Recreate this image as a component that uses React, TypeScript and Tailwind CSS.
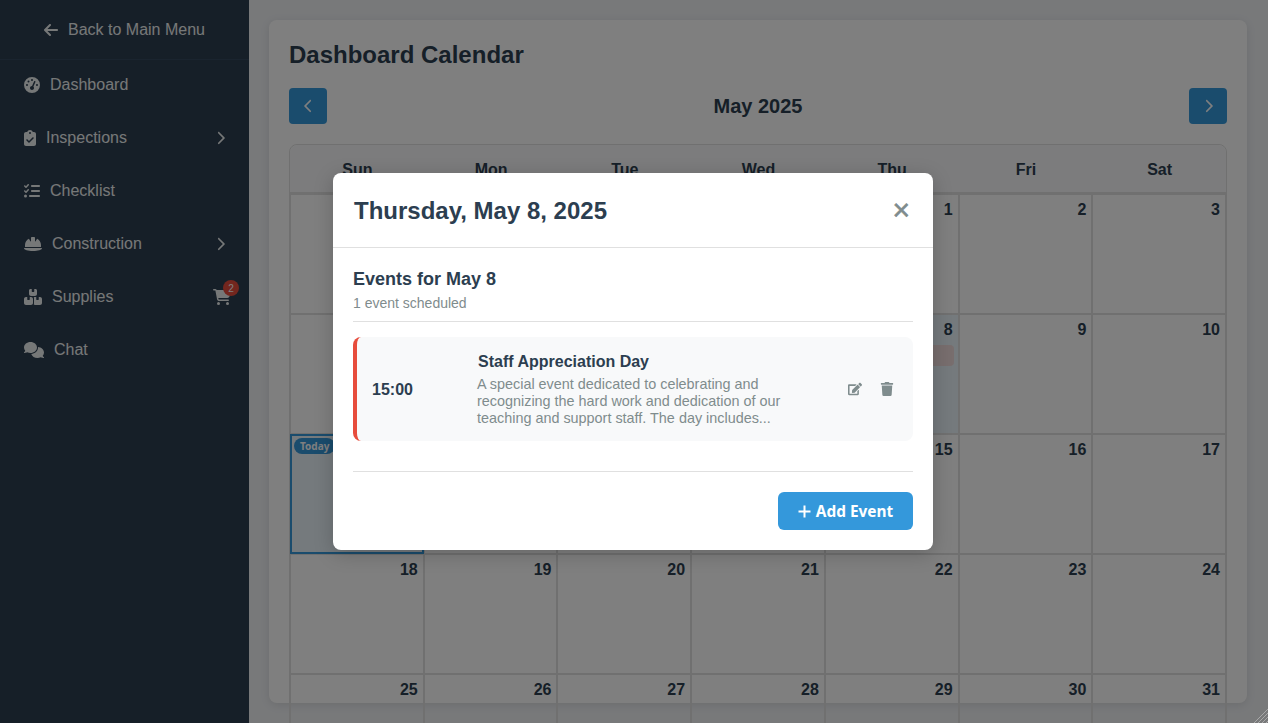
import React from "react";
import { FaArrowLeft, FaGaugeHigh, FaClipboardCheck, FaListCheck, FaHelmetSafety, FaBoxesStacked, FaComments, FaCartShopping, FaChevronRight, FaChevronLeft } from "react-icons/fa6";
import { FaEdit, FaTrash } from "react-icons/fa";

const days = ["Sun", "Mon", "Tue", "Wed", "Thu", "Fri", "Sat"];
const cells: (number | null)[] = [
  null, null, null, null, 1, 2, 3,
  4, 5, 6, 7, 8, 9, 10,
  11, 12, 13, 14, 15, 16, 17,
  18, 19, 20, 21, 22, 23, 24,
  25, 26, 27, 28, 29, 30, 31,
  null, null, null, null, null, null, null,
];

function NavItem({ icon, label, chevron, cart }: { icon: React.ReactNode; label: string; chevron?: boolean; cart?: boolean }) {
  return (
    <div className="h-12 mb-[5px] flex items-center pl-6 pr-6 text-[#ecf0f1] text-base">
      <span className="flex items-center gap-2.5">
        {icon}
        <span>{label}</span>
      </span>
      {chevron && <FaChevronRight className="ml-auto w-[9px] h-[14px]" />}
      {cart && (
        <span className="ml-auto relative mr-[-6px]">
          <FaCartShopping className="w-[18px] h-4" />
          <span className="absolute -top-[9px] -right-[8px] w-4 h-4 rounded-full bg-[#e74c3c] text-white text-[10px] flex items-center justify-center">2</span>
        </span>
      )}
    </div>
  );
}

export default function App() {
  return (
    <div className="relative h-[723px] w-[1268px] overflow-hidden flex bg-[#f0f2f5] font-['Liberation_Sans',Arial,sans-serif]">
      <aside className="w-[249px] shrink-0 bg-[#2c3e50]">
        <div className="h-[60px] flex items-center justify-center gap-2.5 border-b border-[#34495e] text-[#ecf0f1] text-base">
          <FaArrowLeft className="w-[14px] h-4" />
          <span>Back to Main Menu</span>
        </div>
        <div className="mt-px">
          <NavItem icon={<FaGaugeHigh className="w-4 h-4" />} label="Dashboard" />
          <NavItem icon={<FaClipboardCheck className="w-3 h-4" />} label="Inspections" chevron />
          <NavItem icon={<FaListCheck className="w-4 h-4" />} label="Checklist" />
          <NavItem icon={<FaHelmetSafety className="w-[18px] h-4" />} label="Construction" chevron />
          <NavItem icon={<FaBoxesStacked className="w-[18px] h-4" />} label="Supplies" cart />
          <NavItem icon={<FaComments className="w-5 h-4" />} label="Chat" />
        </div>
      </aside>
      <main className="flex-1 pt-5 pb-5 pl-5 pr-[21px] min-w-0">
        <div className="h-[683px] bg-white rounded-lg shadow-[0_2px_10px_rgba(0,0,0,0.1)] p-5">
          <h1 className="text-2xl leading-[30px] font-bold text-[#2c3e50] mb-[18px]">Dashboard Calendar</h1>
          <div className="flex items-center justify-between h-9 mb-5">
            <button className="w-[38px] h-9 rounded bg-[#3498db] text-white flex items-center justify-center"><FaChevronLeft className="w-[9px] h-[14px]" /></button>
            <h2 className="text-xl font-bold text-[#2c3e50]">May 2025</h2>
            <button className="w-[38px] h-9 rounded bg-[#3498db] text-white flex items-center justify-center"><FaChevronRight className="w-[9px] h-[14px]" /></button>
          </div>
          <div className="border border-[#e0e0e0] rounded-lg">
            <div className="grid grid-cols-7 h-[49px] bg-[#f8f9fa] rounded-t-lg border-b-2 border-[#e0e0e0]">
              {days.map((d) => (
                <div key={d} className="flex items-center justify-center pt-[2px] pl-px font-bold text-base text-[#2c3e50]">{d}</div>
              ))}
            </div>
            <div className="grid grid-cols-7 auto-rows-[120px]">
              {cells.map((c, i) => (
                <div key={i} className={`relative border border-[#e0e0e0] ${c === 11 ? "!border-2 !border-[#3498db] bg-[#ebf5fb]" : ""} ${c === 8 ? "bg-[#ebf5fb]" : ""}`}>
                  {c !== null && c !== 11 && <span className="absolute top-[6px] right-[5px] text-base leading-[18px] font-bold text-[#2c3e50]">{c}</span>}
                  {c === 11 && <span className="absolute top-[2px] left-[2px] rounded-[10px] bg-[#3498db] text-white text-[10px] font-bold px-[6px] h-4 leading-4 font-['Noto_Sans',sans-serif]">Today</span>}
                  {c === 8 && <div className="absolute left-1 right-1 top-[30px] h-[21px] rounded-sm bg-[#f0dcdc]" />}
                </div>
              ))}
            </div>
          </div>
        </div>
      </main>

      <div className="absolute inset-0 bg-black/50">
        <div className="absolute left-[333px] top-[173px] w-[600px] h-[377px] bg-white rounded-lg shadow-[0_4px_20px_rgba(0,0,0,0.2)]">
          <div className="h-[75px] flex items-center justify-between pl-[21px] pr-[23px] border-b border-[#e0e0e0]">
            <h2 className="text-2xl font-bold text-[#2c3e50] pt-[1px]">Thursday, May 8, 2025</h2>
            <span className="text-[30px] leading-none font-normal text-[#7f8c8d] [-webkit-text-stroke:0.6px_#7f8c8d]">×</span>
          </div>
          <div className="px-5 pt-5">
            <div className="border-b border-[#e0e0e0] h-[54px]">
              <h3 className="text-lg leading-[22px] font-bold text-[#2c3e50]">Events for May 8</h3>
              <p className="text-sm leading-4 mt-[5px] text-[#7f8c8d]">1 event scheduled</p>
            </div>
            <div className="mt-[15px] h-[104px] rounded-lg bg-[#f8f9fa] border-l-4 border-[#e74c3c] flex items-center">
              <div className="w-[120px] pl-[15px] mt-[2px] text-base font-bold text-[#2c3e50]">15:00</div>
              <div className="w-[320px] self-start pt-[16px]">
                <div className="text-base font-bold leading-[18px] text-[#2c3e50] mb-[5px] ml-px">Staff Appreciation Day</div>
                <p className="text-[14.4px] leading-[17px] text-[#7f8c8d]">A special event dedicated to celebrating and recognizing the hard work and dedication of our teaching and support staff. The day includes...</p>
              </div>
              <div className="ml-auto flex items-center gap-[18px] pr-[19px] text-[#7f8c8d] text-sm">
                <FaEdit />
                <FaTrash />
              </div>
            </div>
            <div className="mt-[30px] border-t border-[#e0e0e0] pt-5 flex justify-end">
              <button className="w-[135px] h-[38px] pt-px rounded-md bg-[#3498db] text-white font-bold text-[15.4px] flex items-center justify-center gap-[5px] font-['Noto_Sans',sans-serif]">
                <svg width="13" height="13" viewBox="0 0 13 13" className="shrink-0">
                  <path d="M6.5 0.5V12.5M0.5 6.5H12.5" stroke="#ffffff" strokeWidth="2" />
                </svg>
                Add Event
              </button>
            </div>
          </div>
        </div>
      </div>
      <svg className="absolute right-0 bottom-0" width="15" height="15" viewBox="0 0 15 15">
        <path d="M15 1L1 15M15 5L5 15M15 9L9 15M15 13L13 15" stroke="#a9a9a9" strokeWidth="1" />
      </svg>
    </div>
  );
}
